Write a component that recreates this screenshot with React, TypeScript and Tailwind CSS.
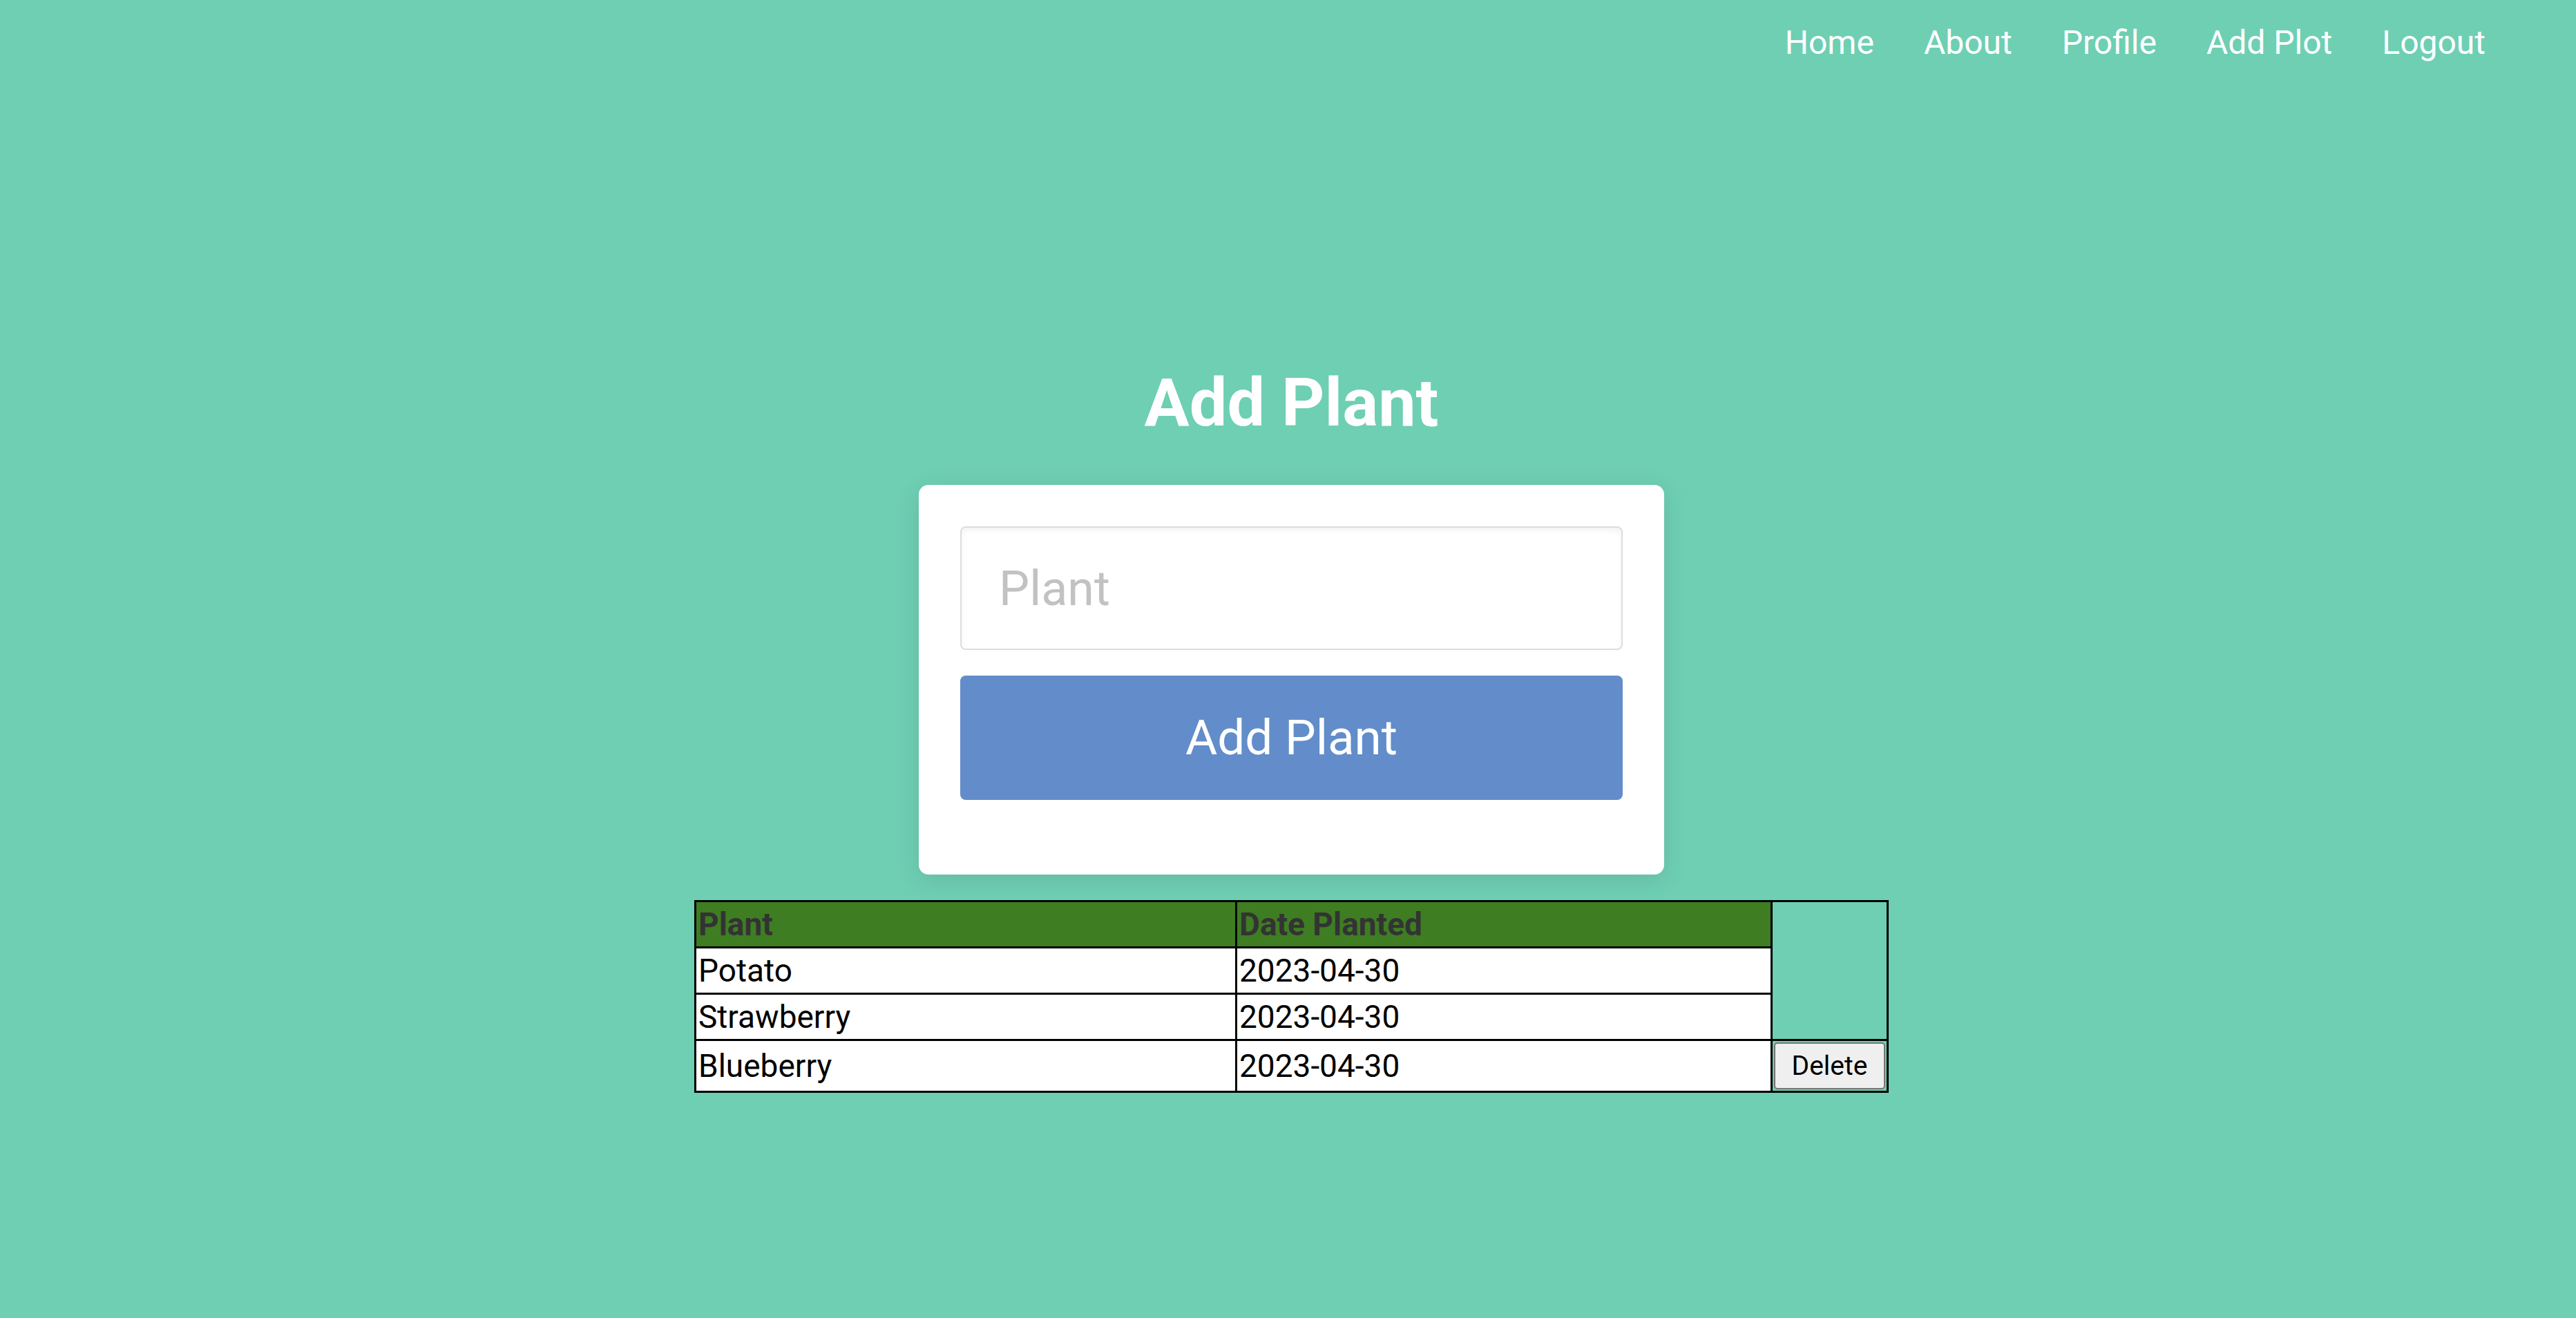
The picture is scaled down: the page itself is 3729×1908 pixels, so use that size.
import React, { useState } from 'react';

type PlantRow = {
  name: string;
  planted: string;
};

const navLinks = ['Home', 'About', 'Profile', 'Add Plot', 'Logout'];

const initialPlants: PlantRow[] = [
  { name: 'Potato', planted: '2023-04-30' },
  { name: 'Strawberry', planted: '2023-04-30' },
  { name: 'Blueberry', planted: '2023-04-30' },
];

function NavBar() {
  return (
    <nav className="h-[124px] flex items-center justify-end gap-[72px] pr-[131px]">
      {navLinks.map((link) => (
        <a key={link} href="#" className="text-white text-[48px] leading-none">
          {link}
        </a>
      ))}
    </nav>
  );
}

function PlantTable({ plants }: { plants: PlantRow[] }) {
  return (
    <table className="mt-[37px] w-[1726px] table-fixed border-collapse border-[3px] border-black text-[46px] leading-none">
      <colgroup>
        <col className="w-[783px]" />
        <col className="w-[775px]" />
        <col className="w-[168px]" />
      </colgroup>
      <tbody>
        <tr className="h-[67px]">
          <th className="bg-[#3e7d22] text-[#333] font-bold text-left px-[3px] border-[3px] border-black">Plant</th>
          <th className="bg-[#3e7d22] text-[#333] font-bold text-left px-[3px] border-[3px] border-black">Date Planted</th>
          <td rowSpan={3} className="border-[3px] border-black"></td>
        </tr>
        {plants.map((plant, i) => (
          <tr key={plant.name} className={i === plants.length - 1 ? 'h-[74px]' : 'h-[67px]'}>
            <td className="bg-white text-black px-[3px] border-[3px] border-black">{plant.name}</td>
            <td className="bg-white text-black px-[3px] border-[3px] border-black">{plant.planted}</td>
            {i === plants.length - 1 && (
              <td className="p-[2px] border-[3px] border-black">
                <button className="w-[161px] h-[68px] bg-[#efefef] border-2 border-[#767676] rounded-[5px] text-black text-[39px] leading-none">
                  Delete
                </button>
              </td>
            )}
          </tr>
        ))}
      </tbody>
    </table>
  );
}

export default function App() {
  const [plantName, setPlantName] = useState('');
  const [plants] = useState<PlantRow[]>(initialPlants);

  return (
    <div className="min-h-screen w-full bg-[#6ecfb3] font-[Roboto,sans-serif]">
      <NavBar />
      <main className="flex flex-col items-center pl-[10px]">
        <h1 className="mt-[411px] h-[96px] text-white text-[97px] font-bold leading-none">Add Plant</h1>
        <div className="mt-[71px] w-[1079px] bg-white rounded-[14px] px-[60px] pt-[60px] pb-[108px] shadow-[0_8px_36px_rgba(0,0,0,0.1)]">
          <input
            type="text"
            value={plantName}
            onChange={(e) => setPlantName(e.target.value)}
            placeholder="Plant"
            className="block w-full h-[179px] border-2 border-[#dddddd] rounded-[8px] pl-[54px] text-[70px] text-[#333] placeholder:text-[#c2c2c2] shadow-[inset_0_4px_8px_rgba(0,0,0,0.05)] outline-none"
          />
          <button className="mt-[37px] block w-full h-[180px] bg-[#628dca] rounded-[8px] text-white text-[71px]">
            Add Plant
          </button>
        </div>
        <PlantTable plants={plants} />
      </main>
    </div>
  );
}
